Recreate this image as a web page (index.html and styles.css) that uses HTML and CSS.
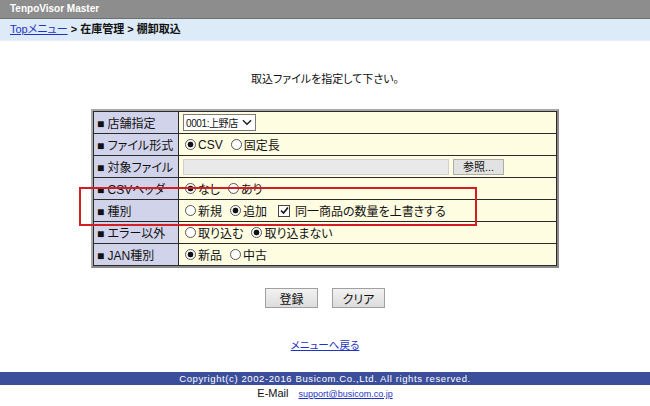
FILE: index.html
```html
<!DOCTYPE html>
<html lang="ja">
<head>
  <meta charset="UTF-8" />
  <title>TenpoVisor Master</title>
  <link rel="stylesheet" href="styles.css">
</head>
<body>
  <div class="header">TenpoVisor Master</div>
  <div class="crumbs"><a href="#">Topメニュー</a> &gt; 在庫管理 &gt; 棚卸取込</div>

  <div class="main">
    <p class="lead">取込ファイルを指定して下さい。</p>

    <div class="form-wrap">
      <table class="form-table">
        <tr>
          <th>■ 店舗指定</th>
          <td><span class="select">0001:上野店<svg width="10" height="7" viewBox="0 0 11 7"><path d="M1 1l4.5 4.5L10 1" fill="none" stroke="#222" stroke-width="1.6"/></svg></span></td>
        </tr>
        <tr>
          <th>■ ファイル形式</th>
          <td><label><input type="radio" name="fmt" checked>CSV</label><label><input type="radio" name="fmt">固定長</label></td>
        </tr>
        <tr>
          <th>■ 対象ファイル</th>
          <td><span class="file-field"></span><span class="file-btn">参照...</span></td>
        </tr>
        <tr>
          <th>■ CSVヘッダ</th>
          <td><label><input type="radio" name="head" checked>なし</label><label><input type="radio" name="head">あり</label></td>
        </tr>
        <tr>
          <th>■ 種別</th>
          <td><label><input type="radio" name="kind">新規</label><label><input type="radio" name="kind" checked>追加</label><label class="chk"><span class="check"><svg width="9" height="9" viewBox="0 0 9 9"><path d="M1 4.5l2.5 2.5L8 1.5" fill="none" stroke="#111" stroke-width="1.6"/></svg></span>同一商品の数量を上書きする</label></td>
        </tr>
        <tr>
          <th>■ エラー以外</th>
          <td><label><input type="radio" name="err">取り込む</label><label><input type="radio" name="err" checked>取り込まない</label></td>
        </tr>
        <tr>
          <th>■ JAN種別</th>
          <td><label><input type="radio" name="jan" checked>新品</label><label><input type="radio" name="jan">中古</label></td>
        </tr>
      </table>
      <div class="mark"></div>
    </div>

    <div class="buttons">
      <button class="btn">登録</button>
      <button class="btn">クリア</button>
    </div>

    <p class="back"><a href="#">メニューへ戻る</a></p>
  </div>

  <div class="footer">Copyright(c) 2002-2016 Busicom.Co.,Ltd. All rights reserved.</div>
  <div class="mail">E-Mail<a href="#">support@busicom.co.jp</a></div>
</body>
</html>
```

FILE: styles.css
```css
* {
  margin: 0;
  padding: 0;
  box-sizing: border-box;
}

body {
  font-family: "Liberation Sans", "Noto Sans CJK JP", sans-serif;
  font-size: 12px;
  font-feature-settings: "palt";
  color: #111;
  background: #fff;
  width: 650px;
  height: 406px;
  overflow: hidden;
}

a {
  color: #1f34c4;
}

.header {
  height: 19px;
  line-height: 18px;
  padding-left: 10px;
  background: #8d8d8d;
  border-bottom: 1px solid #707070;
  color: #fff;
  font-size: 10px;
  font-weight: bold;
}

.crumbs {
  height: 22px;
  line-height: 21px;
  padding-left: 10px;
  background: #ddeaf7;
  border-bottom: 1px solid #e8eef4;
  font-size: 11px;
  font-weight: bold;
}

.crumbs a {
  font-weight: normal;
}

.main {
  padding-top: 31px;
}

.lead {
  text-align: center;
  font-size: 11px;
  line-height: 14px;
  margin-bottom: 23px;
}

.form-wrap {
  position: relative;
  width: 468px;
  margin: 0 auto;
  border: 2px solid #a9a9a9;
  border-right-color: #8a8a8a;
  border-bottom-color: #8a8a8a;
}

.form-table {
  width: 100%;
  border-collapse: collapse;
}

.form-table tr {
  height: 22px;
}

.form-table th,
.form-table td {
  border: 1px solid #2a2a2a;
  text-align: left;
  font-weight: normal;
  white-space: nowrap;
}

.form-table th {
  width: 85px;
  padding-left: 3px;
  background: #d1d3ea;
}

.form-table td {
  padding-left: 4px;
  background: #fffde1;
}

.form-table label {
  display: inline-flex;
  align-items: center;
  margin-right: 6px;
  vertical-align: middle;
}

input[type="radio"] {
  appearance: none;
  width: 11px;
  height: 11px;
  margin: 0 2px 0 2px;
  border: 1px solid #555;
  border-radius: 50%;
  background: #fff;
}

input[type="radio"]:checked {
  background: radial-gradient(circle, #111 0 2.6px, #fff 3.2px);
}

.check {
  display: inline-flex;
  align-items: center;
  justify-content: center;
  width: 12px;
  height: 12px;
  margin-right: 5px;
  border: 1px solid #444;
  background: #fff;
}

.chk {
  margin-left: 5px;
}

.select {
  display: inline-flex;
  align-items: center;
  gap: 4px;
  height: 17px;
  padding: 0 3px 0 2px;
  border: 1px solid #7a7a7a;
  background: #fff;
  font-size: 10px;
  letter-spacing: -0.4px;
  vertical-align: middle;
}

.file-field {
  display: inline-block;
  width: 266px;
  height: 16px;
  background: #e9e9e9;
  border: 1px solid #d0d0d0;
  vertical-align: middle;
}

.file-btn {
  display: inline-block;
  width: 51px;
  height: 16px;
  margin-left: 4px;
  line-height: 14px;
  font-size: 11px;
  text-align: center;
  background: #e2e2e2;
  border: 1px solid #adadad;
  vertical-align: middle;
}

.mark {
  position: absolute;
  left: -14px;
  top: 76px;
  width: 398px;
  height: 39px;
  border: 2px solid #d11f25;
}

.buttons {
  display: flex;
  justify-content: center;
  gap: 14px;
  margin-top: 20px;
}

.btn {
  width: 53px;
  height: 20px;
  font-family: inherit;
  font-size: 12px;
  font-feature-settings: "palt";
  color: #111;
  background: linear-gradient(#f2f2f2, #dcdcdc);
  border: 1px solid #a0a0a0;
}

.back {
  margin-top: 29px;
  text-align: center;
  font-size: 10.5px;
}

.footer {
  position: absolute;
  left: 0;
  top: 372px;
  width: 650px;
  height: 13px;
  line-height: 13px;
  background: #3b4e9b;
  color: #fff;
  font-size: 9.5px;
  letter-spacing: 0.6px;
  text-align: center;
}

.mail {
  position: absolute;
  left: 0;
  top: 387px;
  width: 650px;
  text-align: center;
  font-size: 11px;
}

.mail a {
  margin-left: 10px;
  font-size: 9px;
}
```
